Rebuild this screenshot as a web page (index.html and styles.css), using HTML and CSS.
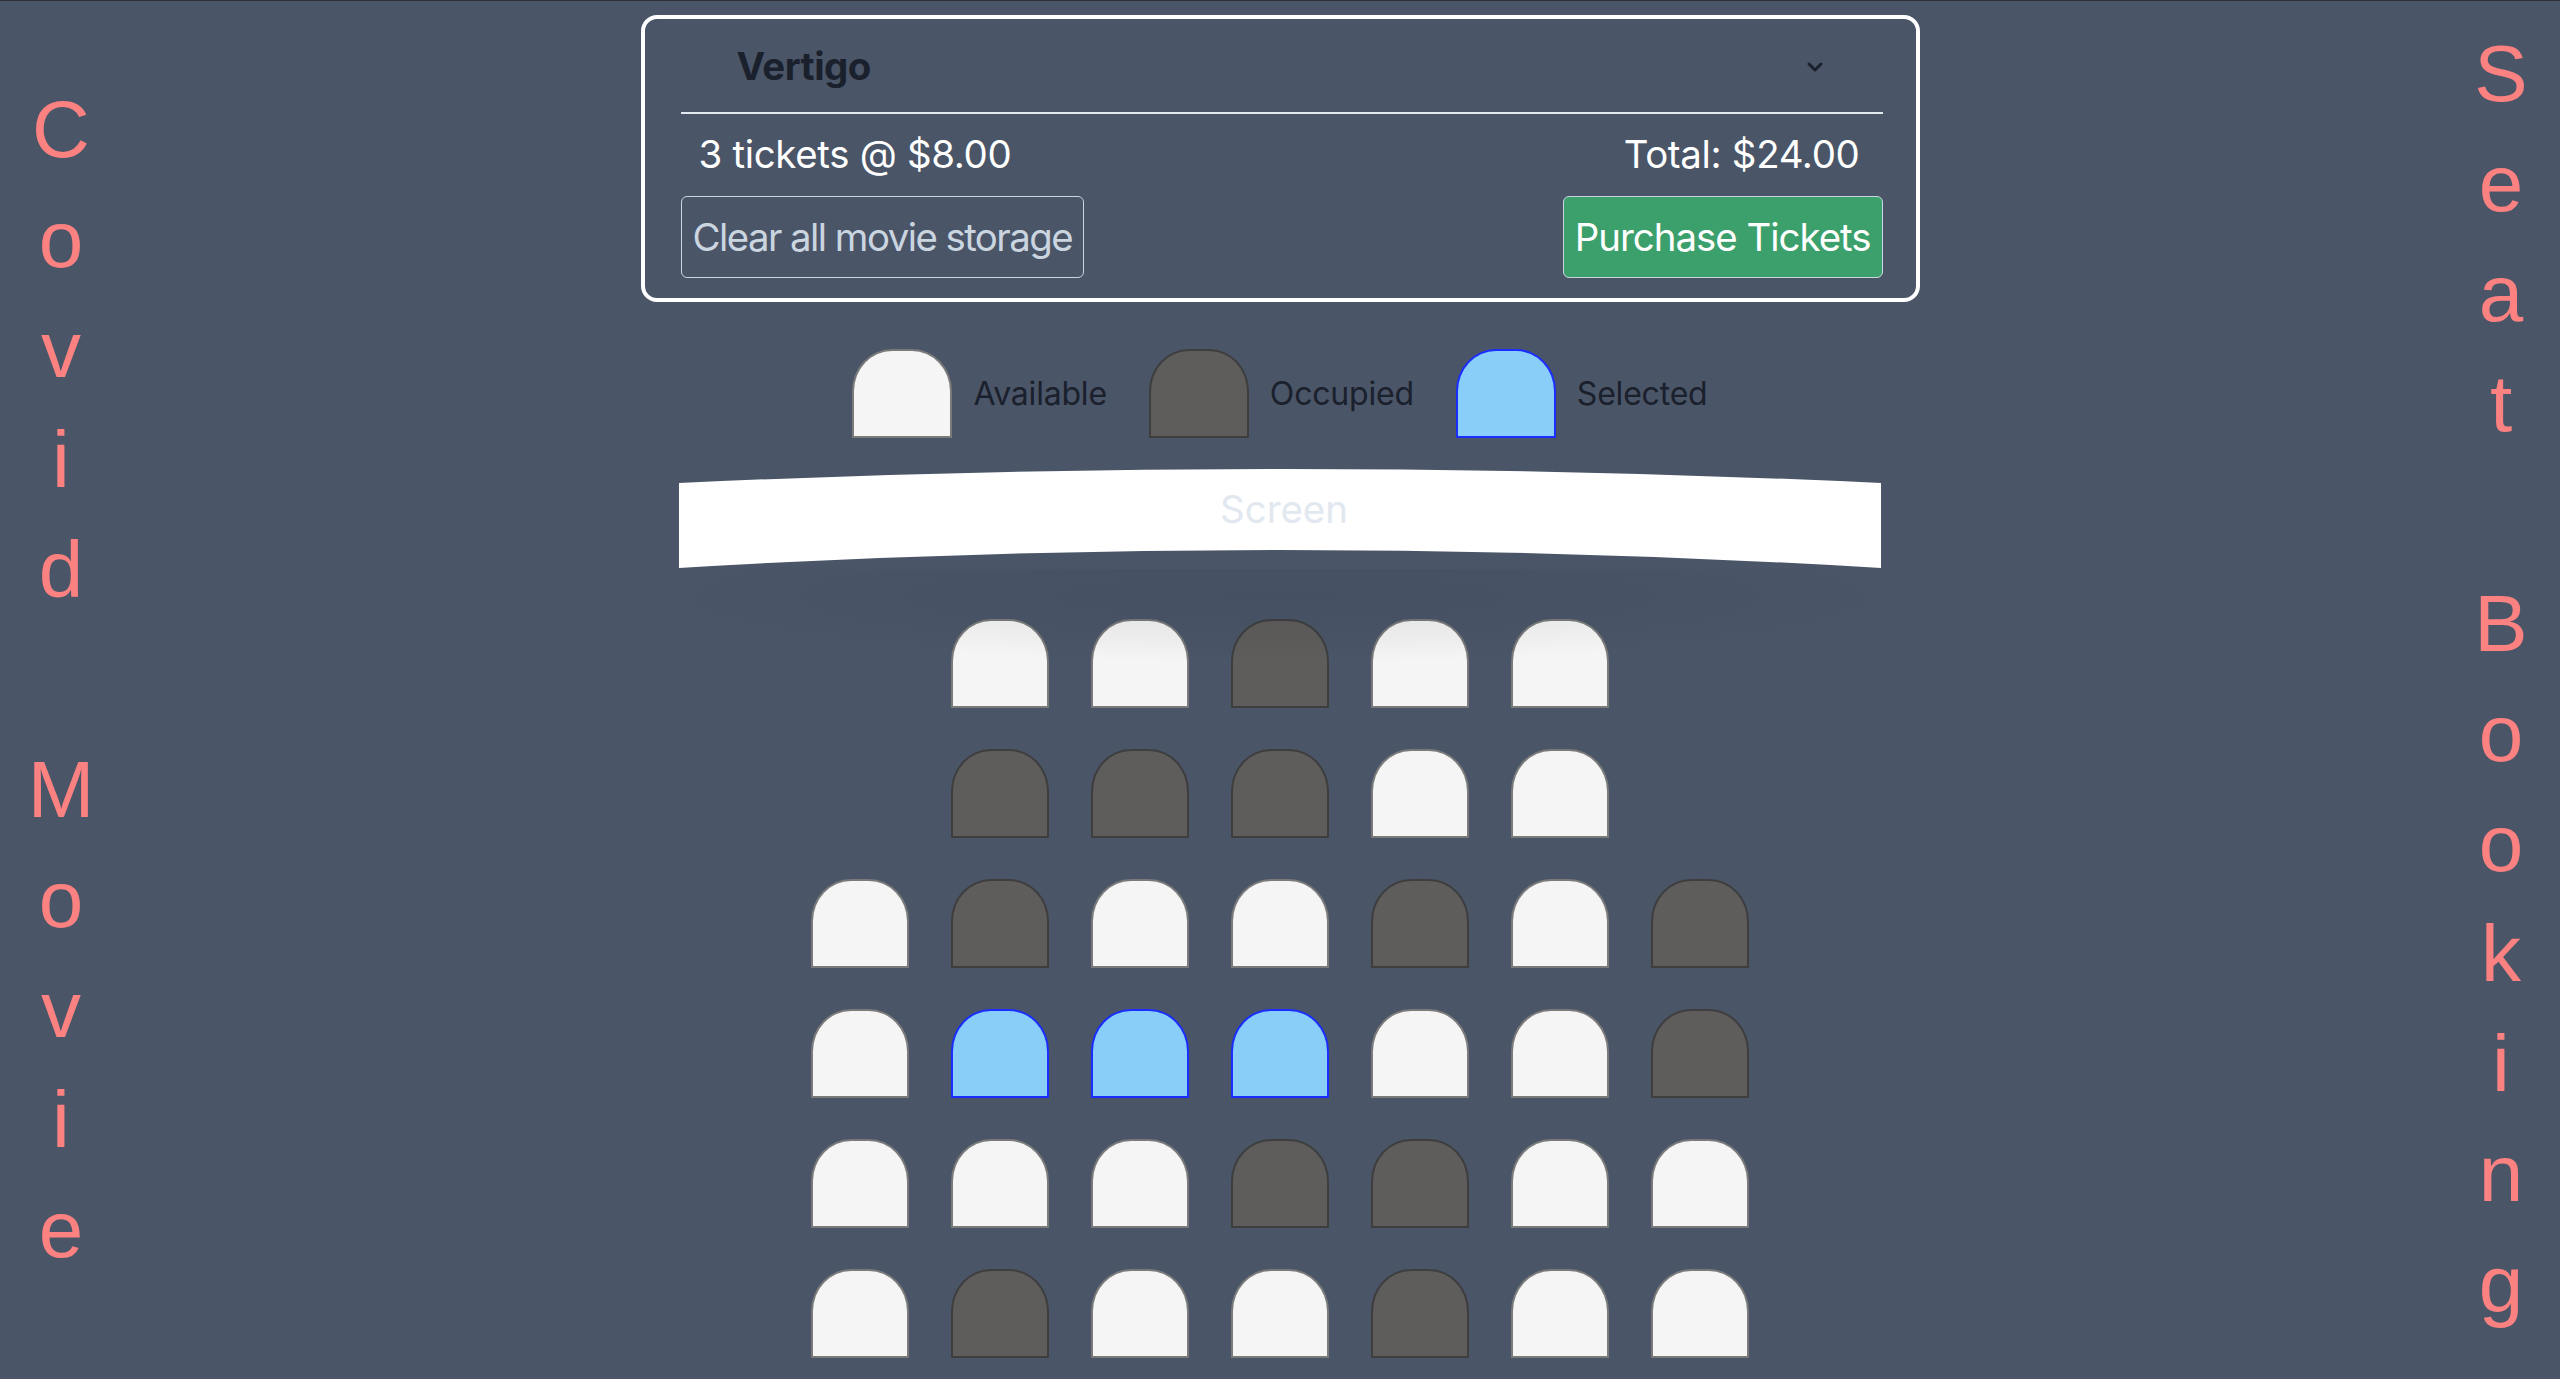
FILE: index.html
```html
<!DOCTYPE html>
<html lang="en">
<head>
<meta charset="utf-8">
<title>Covid Movie Seat Booking</title>
<link rel="stylesheet" href="styles.css">
</head>
<body>
<div class="page">
  <aside class="side side-left">
    <div class="word"><span>C</span><span>o</span><span>v</span><span>i</span><span>d</span></div>
    <div class="word"><span>M</span><span>o</span><span>v</span><span>i</span><span>e</span></div>
  </aside>

  <main class="main">
    <section class="card">
      <div class="select">
        <span class="select-value">Vertigo</span>
        <svg class="chevron" width="18" height="12" viewBox="0 0 18 12"><polyline points="3,3 9,9 15,3" fill="none" stroke="#1a202c" stroke-width="3" stroke-linecap="round" stroke-linejoin="round"/></svg>
      </div>
      <div class="info">
        <span>3 tickets @ $8.00</span>
        <span>Total: $24.00</span>
      </div>
      <div class="actions">
        <button class="btn btn-clear">Clear all movie storage</button>
        <button class="btn btn-buy">Purchase Tickets</button>
      </div>
    </section>

    <ul class="legend">
      <li><span class="seat"></span><span class="legend-label">Available</span></li>
      <li><span class="seat occupied"></span><span class="legend-label">Occupied</span></li>
      <li><span class="seat selected"></span><span class="legend-label">Selected</span></li>
    </ul>

    <div class="theatre">
      <div class="screen">
        <svg class="screen-shape" viewBox="0 0 1202 100" preserveAspectRatio="none"><path d="M0 14 Q601 -14 1202 14 L1202 99 Q601 63 0 99 Z" fill="#ffffff"/></svg>
        <span class="screen-label">Screen</span>
      </div>
      <div class="screen-shadow"></div>

      <div class="rows">
        <div class="row">
          <span class="seat"></span><span class="seat"></span><span class="seat occupied"></span><span class="seat"></span><span class="seat"></span>
        </div>
        <div class="row">
          <span class="seat occupied"></span><span class="seat occupied"></span><span class="seat occupied"></span><span class="seat"></span><span class="seat"></span>
        </div>
        <div class="row">
          <span class="seat"></span><span class="seat occupied"></span><span class="seat"></span><span class="seat"></span><span class="seat occupied"></span><span class="seat"></span><span class="seat occupied"></span>
        </div>
        <div class="row">
          <span class="seat"></span><span class="seat selected"></span><span class="seat selected"></span><span class="seat selected"></span><span class="seat"></span><span class="seat"></span><span class="seat occupied"></span>
        </div>
        <div class="row">
          <span class="seat"></span><span class="seat"></span><span class="seat"></span><span class="seat occupied"></span><span class="seat occupied"></span><span class="seat"></span><span class="seat"></span>
        </div>
        <div class="row">
          <span class="seat"></span><span class="seat occupied"></span><span class="seat"></span><span class="seat"></span><span class="seat occupied"></span><span class="seat"></span><span class="seat"></span>
        </div>
      </div>
    </div>
  </main>

  <aside class="side side-right">
    <div class="word"><span>S</span><span>e</span><span>a</span><span>t</span></div>
    <div class="word"><span>B</span><span>o</span><span>o</span><span>k</span><span>i</span><span>n</span><span>g</span></div>
  </aside>
</div>
</body>
</html>
```

FILE: styles.css
```css
* { box-sizing: border-box; }

html, body {
  margin: 0;
  padding: 0;
  height: 100%;
}

body {
  background: #4a5568;
  border-top: 1px solid #2f3136;
  font-family: Inter, "Noto Sans", "Liberation Sans", sans-serif;
  color: #1a202c;
  overflow: hidden;
}

.page {
  display: grid;
  grid-template-columns: 1fr 1279px 1fr;
  height: 1378px;
}

/* side titles */
.side {
  display: flex;
  flex-direction: column;
  align-items: center;
  font-family: "Liberation Sans", Arial, sans-serif;
  font-size: 80px;
  line-height: 110px;
  color: #fc8181;
}
.side-left {
  justify-self: start;
  width: 122px;
  padding-top: 74px;
}
.side-right {
  justify-self: end;
  width: 118px;
  padding-top: 18px;
}
.word {
  display: flex;
  flex-direction: column;
  align-items: center;
}
.word span { display: block; }
.word + .word { margin-top: 110px; }

/* main */
.main {
  display: flex;
  flex-direction: column;
  align-items: center;
}

.card {
  width: 1279px;
  margin-top: 14px;
  border: 4px solid #ffffff;
  border-radius: 16px;
  padding: 0 33px 20px 36px;
  align-self: stretch;
}

.select {
  height: 95px;
  border-bottom: 2px solid #e2e8f0;
  display: flex;
  align-items: center;
  justify-content: space-between;
  padding: 0 59px 0 56px;
}
.select-value {
  font-size: 38.4px;
  font-weight: 700;
  color: #1a202c;
  letter-spacing: -0.5px;
}
.chevron { display: block; margin-top: 2px; }

.info {
  display: flex;
  justify-content: space-between;
  padding: 0 23px 0 18px;
  margin-top: 17px;
  font-size: 38.4px;
  line-height: 46px;
  color: #ffffff;
  letter-spacing: -0.3px;
}

.actions {
  display: flex;
  justify-content: space-between;
  margin-top: 19px;
}

.btn {
  height: 82px;
  padding: 0 11px;
  font-family: inherit;
  font-size: 38.4px;
  border-radius: 6px;
  background: transparent;
  display: flex;
  align-items: center;
}
.btn-clear {
  border: 1.5px solid #cbd5e0;
  color: #cbd5e0;
  letter-spacing: -1.55px;
}
.btn-buy {
  border: 1.5px solid #cbd5e0;
  background: #3ca06c;
  color: #ffffff;
  letter-spacing: -1px;
}

/* legend */
.legend {
  list-style: none;
  margin: 47px 0 0;
  padding: 0;
  display: flex;
  gap: 42px;
  align-items: center;
}
.legend li {
  display: flex;
  align-items: center;
  gap: 21px;
}
.legend .seat { width: 100px; }
.legend-label {
  font-size: 32px;
  color: #1a202c;
  letter-spacing: -0.2px;
}

/* seats */
.seat {
  display: block;
  width: 98px;
  height: 89px;
  background: #f5f5f5;
  border: 2px solid #7a7a7a;
  border-top-left-radius: 40px 42px;
  border-top-right-radius: 40px 42px;
}
.seat.occupied {
  background: #5e5d5b;
  border-color: #3e3e3f;
}
.seat.selected {
  background: #89cef8;
  border-color: #1b2dff;
}

/* theatre */
.theatre {
  position: relative;
  width: 1202px;
  margin-top: 31px;
  display: flex;
  flex-direction: column;
  align-items: center;
}

.screen {
  position: relative;
  width: 1202px;
  height: 100px;
  display: flex;
  justify-content: center;
}
.screen-shape {
  position: absolute;
  inset: 0;
  width: 100%;
  height: 100%;
}
.screen-label {
  position: relative;
  font-size: 38.4px;
  line-height: 46px;
  margin-top: 17px;
  margin-left: 8px;
  color: #e2e8f0;
}

.screen-shadow {
  position: absolute;
  left: 0;
  top: 100px;
  width: 1202px;
  height: 110px;
  background: radial-gradient(ellipse 52% 60% at 50% 25%, rgba(20, 26, 40, 0.09), rgba(20, 26, 40, 0.05) 55%, rgba(20, 26, 40, 0) 100%);
  pointer-events: none;
  z-index: 2;
}

.rows {
  margin-top: 50px;
  display: flex;
  flex-direction: column;
  gap: 41px;
}
.row {
  display: flex;
  justify-content: center;
  gap: 42px;
}
```
